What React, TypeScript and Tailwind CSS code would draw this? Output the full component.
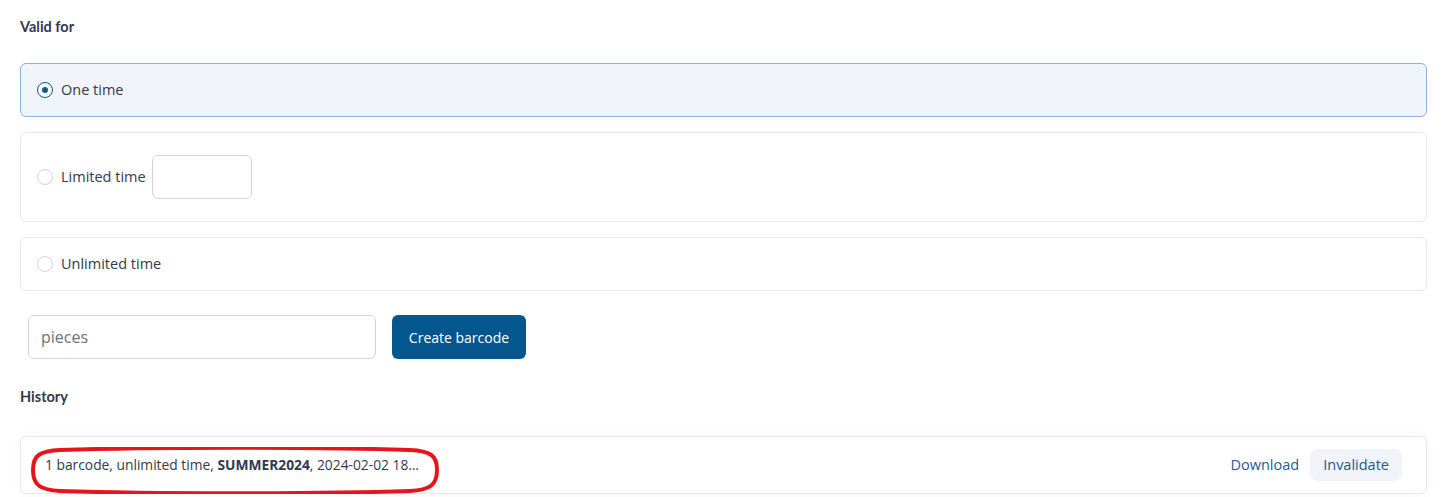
import React from "react";

function Radio({ checked }: { checked?: boolean }) {
  return checked ? (
    <span className="flex h-4 w-4 shrink-0 items-center justify-center rounded-full border-[1.5px] border-[#0b5a91] bg-white">
      <span className="h-[6px] w-[6px] rounded-full bg-[#0b5a91]" />
    </span>
  ) : (
    <span className="h-4 w-4 shrink-0 rounded-full border border-[#cfd3dc] bg-white" />
  );
}

export default function App() {
  return (
    <div className="min-h-[497px] w-full bg-white pl-5 pr-[15px] pt-[18px] font-['Open_Sans',sans-serif] text-[#323a4d]">
      <h2 className="font-['Lato',sans-serif] text-[14.5px] font-bold leading-[18px] text-[#333946]">Valid for</h2>

      <div className="mt-[27px] flex flex-col gap-[15px]">
        <label className="flex h-[54px] items-center rounded-md border border-[#90b1d1] bg-[#f0f4f8] px-4">
          <Radio checked />
          <span className="ml-2 text-[14.5px]">One time</span>
        </label>
        <label className="flex h-[90px] items-center rounded-md border border-[#e6e8ee] bg-white px-4">
          <Radio />
          <span className="ml-2 text-[14.5px]">Limited time</span>
          <span className="ml-[6px] h-[44px] w-[100px] rounded-md border border-[#d2d5df] bg-white" />
        </label>
        <label className="flex h-[54px] items-center rounded-md border border-[#e6e8ee] bg-white px-4">
          <Radio />
          <span className="ml-2 text-[14.5px]">Unlimited time</span>
        </label>
      </div>

      <div className="mt-6 flex items-center gap-4 pl-2">
        <div className="flex h-[44px] w-[348px] items-center rounded-md border border-[#d2d5df] bg-white px-3 text-[16px] text-[#6b7280]">
          pieces
        </div>
        <button className="h-[44px] w-[134px] rounded-md bg-[#04568f] text-[14px] text-white">Create barcode</button>
      </div>

      <h2 className="mt-[29px] font-['Lato',sans-serif] text-[14.5px] font-bold leading-[18px] text-[#333946]">History</h2>

      <div className="relative mt-[30px] flex h-[58px] items-center justify-between rounded-md border border-[#e6e8ee] bg-white pl-6 pr-6 shadow-[0_0_12px_rgba(0,0,0,0.04)]">
        <span className="text-[13.8px]">
          1 barcode, unlimited time, <b className="font-bold">SUMMER2024</b>, 2024-02-02 18…
        </span>
        <div className="flex items-center gap-[11px]">
          <span className="text-[14.5px] text-[#1d5b8c]">Download</span>
          <span className="flex h-[32px] items-center rounded-lg bg-[#f0f3f7] px-[13px] text-[14.5px] text-[#1d5b8c]">Invalidate</span>
        </div>
        <svg className="pointer-events-none absolute left-[9px] top-[10px]" width="410" height="47" viewBox="0 0 410 47">
          <path
            d="M30 3 C120 0 290 0 380 3 C400 4 407 8 407 23 C407 38 400 43 380 44 C290 47 120 47 30 44 C10 43 3 38 3 23 C3 8 10 4 30 3 Z"
            fill="none"
            stroke="#e8141c"
            strokeWidth="4"
          />
        </svg>
      </div>
    </div>
  );
}
